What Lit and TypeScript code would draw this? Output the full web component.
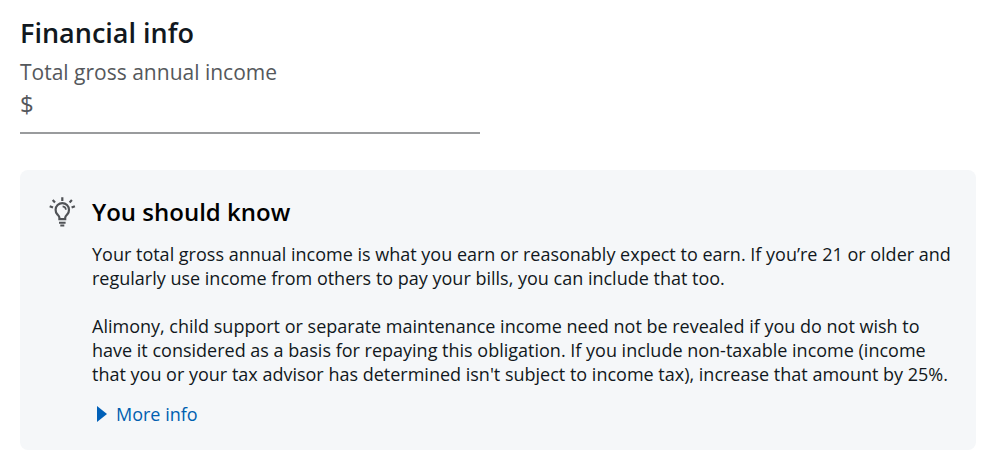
import { LitElement, html, css } from 'lit';
import { customElement, state } from 'lit/decorators.js';

@customElement('app-root')
export class AppRoot extends LitElement {
  static styles = css`
    :host { display: block; font-family: 'Open Sans', sans-serif; color: #111820; background: #fff; }
    .page { padding: 15px 26px 16px 20px; }
    h2 { margin: 0; font-size: 27px; line-height: 36px; font-weight: 600; color: #111820; }
    h3 { margin: 0; font-size: 24px; line-height: 32px; font-weight: 600; color: #000; }
    .field { display: block; max-width: 460px; margin-bottom: 36px; color: #55585c; }
    .label { display: block; font-size: 21px; line-height: 28px; margin-top: 7px; }
    .entry { display: flex; align-items: center; font-size: 24px; line-height: 32px; padding: 2px 0 12px; border-bottom: 2px solid #999b9d; }
    input { flex: 1; min-width: 0; height: 32px; padding: 0 0 0 4px; border: 0; outline: 0; background: transparent; font: inherit; color: inherit; }
    .note { display: grid; grid-template-columns: 28px 1fr; column-gap: 16px; padding: 26px 24px 24px 28px; border-radius: 8px; background: #f5f7f9; }
    .bulb { width: 28px; height: 32px; }
    .body { font-size: 18px; line-height: 24px; }
    p { margin: 0 0 24px; }
    .intro { margin-top: 14px; }
    .last { margin-bottom: 16px; }
    .more { display: flex; align-items: center; gap: 8px; padding: 0 0 0 4px; border: 0; background: none; font: inherit; color: #0060b0; cursor: pointer; }
  `;
  @state() private income = '';

  render() {
    return html`
      <main class="page">
        <h2>Financial info</h2>
        <div class="field">
          <label class="label" for="income">Total gross annual income</label>
          <div class="entry"><span>$</span><input id="income" inputmode="decimal" .value=${this.income}
            @input=${(e: Event) => (this.income = (e.target as HTMLInputElement).value)} /></div>
        </div>
        <section class="note">
          <svg class="bulb" viewBox="0 0 28 32" fill="none" stroke="#505357" stroke-width="2.2" aria-hidden="true">
            <path d="M11.4 23.2v-1.4c0-1.6-.9-2.3-2-3.4a6.7 6.7 0 1 1 9.8 0c-1.1 1.1-2 1.8-2 3.4v1.4z" />
            <path d="M14.6 10.4a3.6 3.6 0 0 1 3.3 3.4" stroke-width="1.6" />
            <path d="M14.3 1.3v3.6M4.7 3.9l2.3 2.5M23.9 3.9l-2.3 2.5M1.7 10.2l3.3 1.3M26.9 10.2l-3.3 1.3" />
            <path d="M11 26.8h6.6M12.3 29.5h4" stroke-width="1.9" />
          </svg>
          <div class="body">
            <h3>You should know</h3>
            <p class="intro">Your total gross annual income is what you earn or reasonably expect to earn. If you’re 21 or older and regularly use income from others to pay your bills, you can include that too.</p>
            <p class="last">Alimony, child support or separate maintenance income need not be revealed if you do not wish to have it considered as a basis for repaying this obligation. If you include non-taxable income (income that you or your tax advisor has determined isn't subject to income tax), increase that amount by 25%.</p>
            <button class="more" type="button"><svg width="12" height="16" viewBox="0 0 12 16" aria-hidden="true"><path d="M1 0L11 8L1 16z" fill="#0060b8" /></svg>More info</button>
          </div>
        </section>
      </main>`;
  }
}
